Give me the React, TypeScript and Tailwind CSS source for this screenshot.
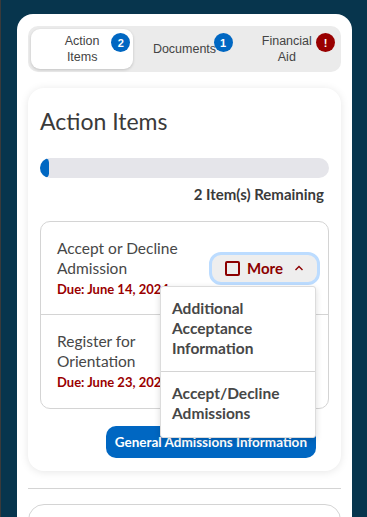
import React from 'react';

function Badge({ n, red }: { n: string; red?: boolean }) {
  return (
    <span
      className={`absolute top-[4px] right-[3px] w-[19px] h-[19px] rounded-full flex items-center justify-center text-white text-[11px] font-bold ${
        red ? 'bg-[#990000]' : 'bg-[#0067c2]'
      }`}
    >
      {n}
    </span>
  );
}

function MoreButton() {
  return (
    <button className="flex items-center gap-[7px] h-[33px] pl-[13px] pr-[12px] rounded-[12px] bg-[#eeeeee] border-[3px] border-[#bcdcff] text-[#8c0000] font-bold text-[15px] leading-none">
      <span className="w-[15px] h-[15px] border-2 border-[#8c0000] rounded-[2px]" />
      <span>More</span>
      <svg width="12" height="12" viewBox="0 0 12 12" className="ml-[3px]">
        <path d="M2.5 8 L6 4.5 L9.5 8" fill="none" stroke="#8c0000" strokeWidth="1.4" />
      </svg>
    </button>
  );
}

function Row({ title, due, last, open }: { title: string[]; due: string; last?: boolean; open?: boolean }) {
  return (
    <div
      className={`flex items-center justify-between pl-[16px] pr-[8px] h-[93px] ${
        last ? '' : 'border-b border-[#d4d4d4]'
      }`}
    >
      <div className="flex flex-col">
        {title.map((t) => (
          <span key={t} className="text-[15.5px] leading-[20px] text-[#474747]">
            {t}
          </span>
        ))}
        <span className="text-[13px] leading-[20px] mt-[1px] font-bold text-[#9a0000] whitespace-nowrap">
          {due}
        </span>
      </div>
      {open && <MoreButton />}
    </div>
  );
}

export default function App() {
  return (
    <div
      className="w-[367px] h-[517px] overflow-hidden bg-[#07354d] border-l border-[#3a3a3a] pt-[14px] pl-[16px] pr-[15px]"
      style={{ fontFamily: 'Lato, "Open Sans", sans-serif' }}
    >
      <div className="bg-white rounded-t-[16px] h-full px-[11px] pt-[12px]">
        {/* Tabs */}
        <div
          className="flex bg-[#ebebeb] rounded-[10px] p-[3px] h-[46px] text-[#444] text-[12.5px] leading-[16px]"
          style={{ fontFamily: '"Liberation Sans", Arial, sans-serif' }}
        >
          <div className="relative flex-1 bg-white rounded-[9px] shadow-[0_1px_3px_rgba(0,0,0,0.18)] flex items-center justify-center text-center">
            <span>
              Action
              <br />
              Items
            </span>
            <Badge n="2" />
          </div>
          <div className="relative flex-1 flex items-center justify-center text-center">
            <span>Documents</span>
            <Badge n="1" />
          </div>
          <div className="relative flex-1 flex items-center justify-center text-center">
            <span>
              Financial
              <br />
              Aid
            </span>
            <Badge n="!" red />
          </div>
        </div>

        {/* Action Items card */}
        <div className="relative mt-[16px] rounded-[16px] bg-white shadow-[0_1px_8px_rgba(0,0,0,0.1)] px-[12px] pt-[19px] pb-[13px]">
          <h2 className="text-[23px] leading-[28px] text-[#3a3a3a]">Action Items</h2>

          <div className="mt-[23px] h-[20px] rounded-full bg-[#e5e5ea] overflow-hidden">
            <div className="h-full w-[9px] rounded-full bg-[#0067c2]" />
          </div>
          <div className="mt-[7px] text-right pr-[5px] text-[15px] leading-[18px] font-bold text-[#3a3a3a]">
            2 Item(s) Remaining
          </div>

          <div className="mt-[18px] border border-[#d4d4d4] rounded-[10px]">
            <Row title={['Accept or Decline', 'Admission']} due="Due: June 14, 2024" open />
            <Row title={['Register for', 'Orientation']} due="Due: June 23, 2024" last />
          </div>

          <div className="flex justify-end mt-[17px] pr-[13px]">
            <button className="h-[32px] px-[9px] rounded-[10px] bg-[#0067c2] text-white text-[13.5px] font-bold">
              General Admissions Information
            </button>
          </div>

          {/* Dropdown menu */}
          <div className="absolute left-[132px] top-[198px] w-[156px] bg-white border border-[#dcdcdc] rounded-[3px] shadow-[0_2px_6px_rgba(0,0,0,0.15)] text-[15.5px] leading-[20px] font-bold text-[#474747]">
            <div className="px-[11px] pt-[11px] pb-[13px]">
              Additional
              <br />
              Acceptance
              <br />
              Information
            </div>
            <div className="border-t border-[#d4d4d4] px-[11px] pt-[11px] pb-[14px]">
              Accept/Decline
              <br />
              Admissions
            </div>
          </div>
        </div>

        <div className="mt-[17px] border-t border-[#d4d4d4]" />
        <div className="mt-[15px] h-[60px] rounded-[16px] border border-[#d4d4d4]" />
      </div>
    </div>
  );
}
